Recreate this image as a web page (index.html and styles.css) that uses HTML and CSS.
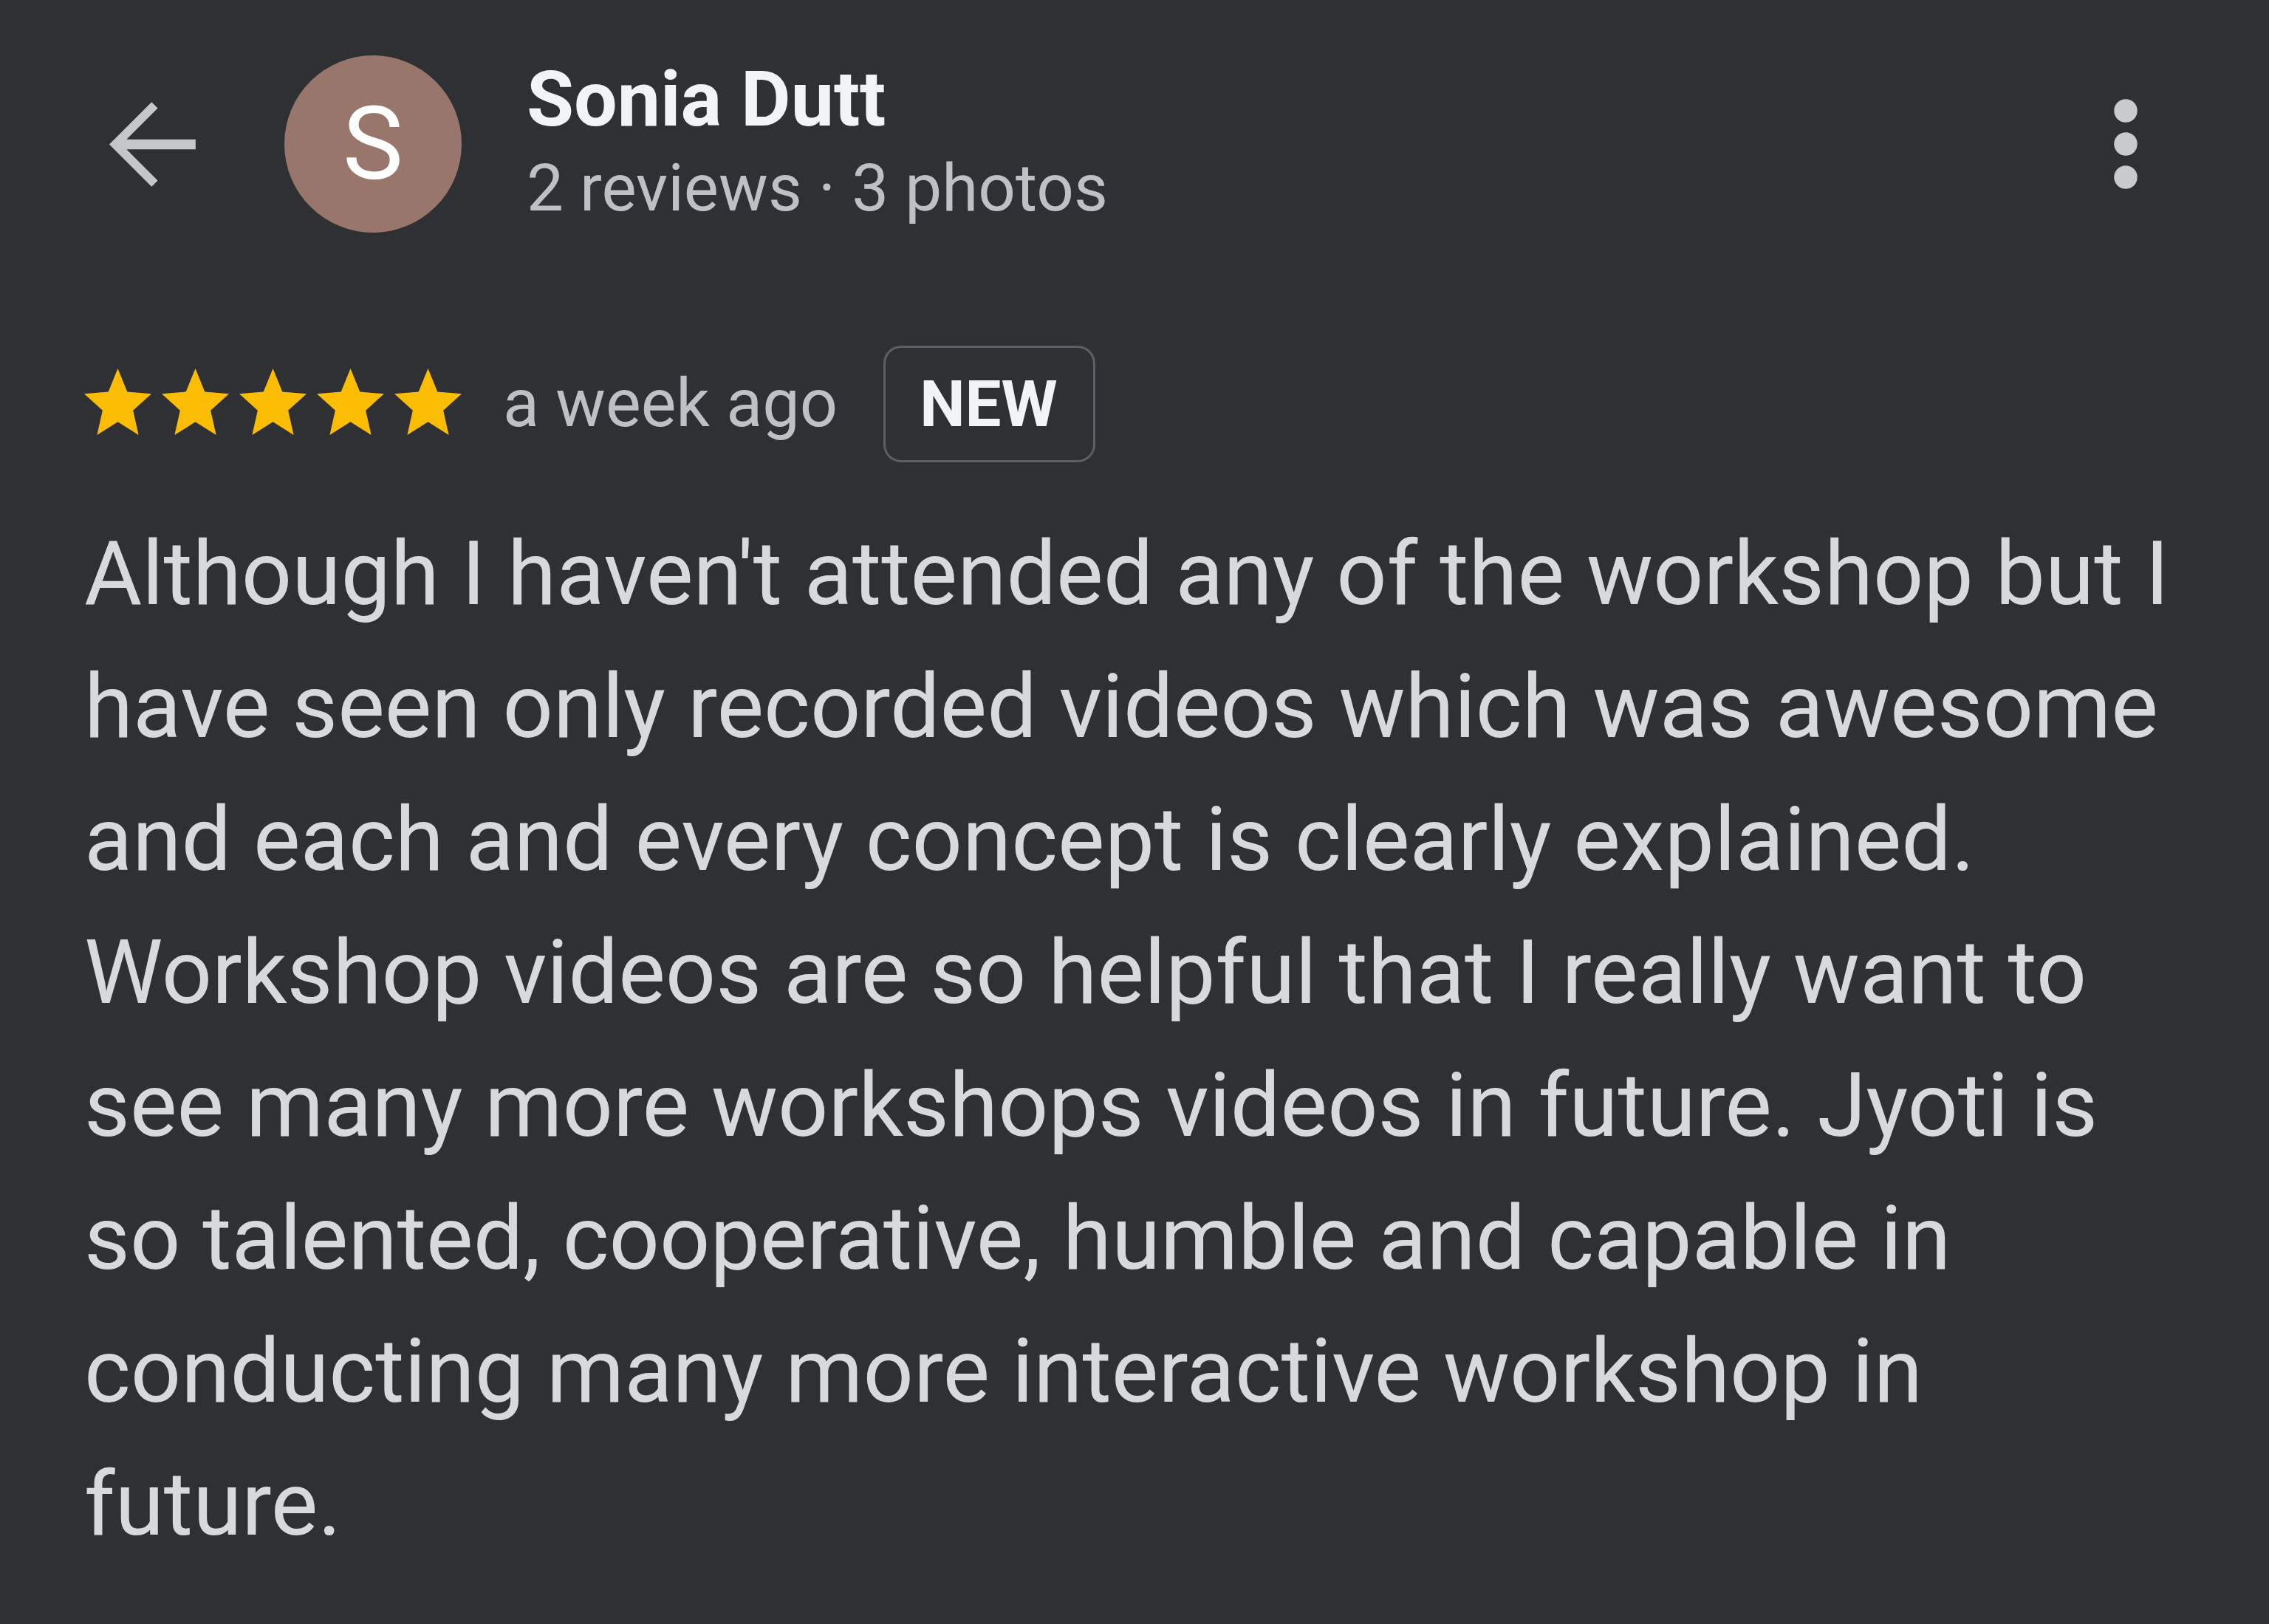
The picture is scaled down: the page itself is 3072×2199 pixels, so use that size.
FILE: index.html
```html
<!DOCTYPE html>
<html lang="en">
<head>
<meta charset="utf-8">
<title>Review</title>
<link rel="stylesheet" href="styles.css">
</head>
<body>
<div class="page">
  <header class="header">
    <svg class="back" viewBox="0 0 24 24" aria-hidden="true"><path d="M20 11.1H7.6l5.6-5.6-1.1-1.1L4.5 12l7.6 7.6 1.1-1.1-5.6-5.6H20z"/></svg>
    <div class="avatar">S</div>
    <div class="who">
      <div class="name">Sonia Dutt</div>
      <div class="meta">2 reviews · 3 photos</div>
    </div>
    <svg class="more" viewBox="0 0 24 24" aria-hidden="true"><circle cx="12" cy="6" r="2.1"/><circle cx="12" cy="12" r="2.1"/><circle cx="12" cy="18" r="2.1"/></svg>
  </header>
  <div class="rating">
    <div class="stars">
      <svg class="star" viewBox="2 2 20 19" preserveAspectRatio="none"><path d="M12 17.27L18.18 21l-1.64-7.03L22 9.24l-7.19-.61L12 2 9.19 8.63 2 9.24l5.46 4.73L5.82 21z"/></svg>
      <svg class="star" viewBox="2 2 20 19" preserveAspectRatio="none"><path d="M12 17.27L18.18 21l-1.64-7.03L22 9.24l-7.19-.61L12 2 9.19 8.63 2 9.24l5.46 4.73L5.82 21z"/></svg>
      <svg class="star" viewBox="2 2 20 19" preserveAspectRatio="none"><path d="M12 17.27L18.18 21l-1.64-7.03L22 9.24l-7.19-.61L12 2 9.19 8.63 2 9.24l5.46 4.73L5.82 21z"/></svg>
      <svg class="star" viewBox="2 2 20 19" preserveAspectRatio="none"><path d="M12 17.27L18.18 21l-1.64-7.03L22 9.24l-7.19-.61L12 2 9.19 8.63 2 9.24l5.46 4.73L5.82 21z"/></svg>
      <svg class="star" viewBox="2 2 20 19" preserveAspectRatio="none"><path d="M12 17.27L18.18 21l-1.64-7.03L22 9.24l-7.19-.61L12 2 9.19 8.63 2 9.24l5.46 4.73L5.82 21z"/></svg>
    </div>
    <span class="when">a week ago</span>
    <span class="badge">NEW</span>
  </div>
  <p class="review">Although I haven't attended any of the workshop but I have seen only recorded videos which was awesome and each and every concept is clearly explained. Workshop videos are so helpful that I really want to see many more workshops videos in future. Jyoti is so talented, cooperative, humble and capable in conducting many more interactive workshop in future.</p>
</div>
</body>
</html>
```
FILE: styles.css
```css
html, body {
  margin: 0;
  padding: 0;
  background: #2f3033;
}
body {
  font-family: Roboto, "Noto Sans", "Liberation Sans", sans-serif;
  width: 3072px;
  height: 2199px;
  overflow: hidden;
}
.page {
  padding: 75px 104px 0 114px;
}
.header {
  display: flex;
  align-items: center;
  height: 240px;
}
.back {
  width: 181px;
  height: 181px;
  fill: #c4c7ca;
  flex: none;
}
.avatar {
  width: 240px;
  height: 240px;
  border-radius: 50%;
  background: #98766b;
  color: #ffffff;
  font-size: 138px;
  line-height: 240px;
  text-align: center;
  margin-left: 90px;
  flex: none;
}
.who {
  margin-left: 88px;
  flex: 1;
}
.name {
  color: #f1f3f4;
  font-size: 104px;
  font-weight: 700;
  line-height: 120px;
}
.meta {
  color: #bdc1c6;
  font-size: 89px;
  line-height: 120px;
}
.more {
  width: 180px;
  height: 180px;
  fill: #c8cacd;
  flex: none;
}
.rating {
  display: flex;
  align-items: center;
  margin-top: 153px;
}
.stars {
  display: flex;
  gap: 14px;
  margin-top: -6px;
}
.star {
  width: 91px;
  height: 90px;
  fill: #fbbc04;
}
.when {
  color: #bdc1c6;
  font-size: 90px;
  line-height: 100px;
  margin-left: 56px;
}
.badge {
  margin-left: 62px;
  border: 3px solid #5c5f63;
  border-radius: 24px;
  padding: 26px 48px 26px 46px;
  color: #f1f3f4;
  font-size: 87px;
  font-weight: 700;
  line-height: 100px;
}
.review {
  margin: 61px 0 0 0;
  width: 2844px;
  color: #d7d9dc;
  font-size: 120px;
  line-height: 180px;
}
```
